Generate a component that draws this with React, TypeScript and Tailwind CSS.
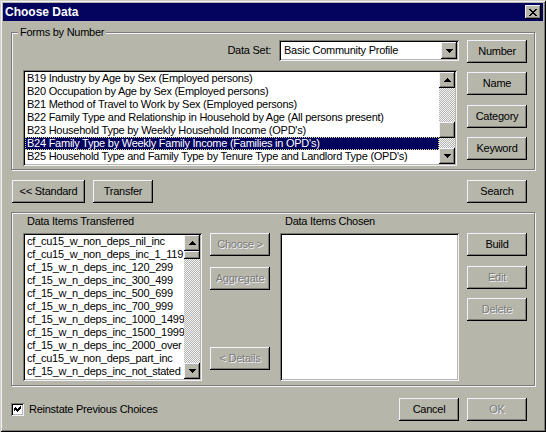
import React from 'react';

const raised =
  'bg-[#b6b6aa] shadow-[inset_-1px_-1px_0_#000,inset_1px_1px_0_#f2f2fe,inset_-2px_-2px_0_#7c7c74]';
const sunken =
  'shadow-[inset_1px_1px_0_#7c7c74,inset_-1px_-1px_0_#f2f2fe,inset_2px_2px_0_#000,inset_-2px_-2px_0_#b6b6aa]';
const etched = 'border border-[#7c7c74] shadow-[inset_1px_1px_0_#f2f2fe,1px_1px_0_#f2f2fe]';
const track =
  'bg-[image:repeating-conic-gradient(#f2f2fe_0_25%,#b6b6aa_0_50%)] bg-[length:2px_2px]';

const forms = [
  'B19 Industry by Age by Sex (Employed persons)',
  'B20 Occupation by Age by Sex (Employed persons)',
  'B21 Method of Travel to Work by Sex (Employed persons)',
  'B22 Family Type and Relationship in Household by Age (All persons present)',
  "B23 Household Type by Weekly Household Income (OPD's)",
  "B24 Family Type by Weekly Family Income (Families in OPD's)",
  "B25 Household Type and Family Type by Tenure Type and Landlord Type (OPD's)",
  "B26 Household Type and Family Type by Household Size (OPD's)",
];

const transferred = [
  'cf_cu15_w_non_deps_nil_inc',
  'cf_cu15_w_non_deps_inc_1_119',
  'cf_15_w_n_deps_inc_120_299',
  'cf_15_w_n_deps_inc_300_499',
  'cf_15_w_n_deps_inc_500_699',
  'cf_15_w_n_deps_inc_700_999',
  'cf_15_w_n_deps_inc_1000_1499',
  'cf_15_w_n_deps_inc_1500_1999',
  'cf_15_w_n_deps_inc_2000_over',
  'cf_cu15_w_non_deps_part_inc',
  'cf_15_w_n_deps_inc_not_stated',
];

function Btn({ label, className = '', disabled = false }: { label: string; className?: string; disabled?: boolean }) {
  return (
    <button
      type="button"
      className={`${raised} h-[23px] shrink-0 flex items-center justify-center leading-none ${
        disabled ? 'text-[#7c7c74] [text-shadow:1px_1px_0_#f2f2fe]' : 'text-black'
      } ${className}`}
    >
      {label}
    </button>
  );
}

function Arrow({ dir, className = 'w-[16px] h-[16px]' }: { dir: 'up' | 'down'; className?: string }) {
  const rows = dir === 'up' ? [0, 1, 2, 3] : [3, 2, 1, 0];
  return (
    <div className={`${raised} shrink-0 flex items-center justify-center ${className}`}>
      <svg width="7" height="4" viewBox="0 0 7 4" shapeRendering="crispEdges">
        {rows.map((r, i) => (
          <rect key={i} x={3 - r} y={i} width={r * 2 + 1} height={1} fill="#000" />
        ))}
      </svg>
    </div>
  );
}

function Scrollbar({ thumb }: { thumb: string }) {
  return (
    <div className="w-[16px] shrink-0 flex flex-col">
      <Arrow dir="up" />
      <div className={`flex-1 ${track}`}>
        <div className={`${raised} w-[16px] ${thumb}`} />
      </div>
      <Arrow dir="down" />
    </div>
  );
}

export default function App() {
  return (
    <div
      className={`w-[546px] h-[432px] bg-[#b6b6aa] p-[3px] flex flex-col font-['Liberation_Sans',Arial,sans-serif] text-[11px] tracking-[-0.25px] text-black shadow-[inset_1px_1px_0_#cfcfc4,inset_-1px_-1px_0_#000,inset_2px_2px_0_#f2f2fe,inset_-2px_-2px_0_#7c7c74]`}
    >
      {/* title bar */}
      <div className="h-[18px] shrink-0 bg-[#04045e] flex items-center justify-between pl-[2px] pr-[2px]">
        <span className="text-white font-bold text-[12px] tracking-normal leading-none">Choose Data</span>
        <div className={`${raised} w-[16px] h-[14px] flex items-center justify-center`}>
          <svg width="8" height="7" viewBox="0 0 8 7" shapeRendering="crispEdges">
            <path d="M0 0h2v1h-2zM6 0h2v1h-2zM1 1h2v1h-2zM5 1h2v1h-2zM2 2h4v1h-4zM3 3h2v1h-2zM2 4h4v1h-4zM1 5h2v1h-2zM5 5h2v1h-2zM0 6h2v1h-2zM6 6h2v1h-2z" fill="#000" />
          </svg>
        </div>
      </div>

      <div className="flex flex-col px-[8px]">
        {/* Forms by Number */}
        <div className={`${etched} mt-[11px] flex flex-col`}>
          <span className="-mt-[7px] ml-[6px] w-fit px-[2px] bg-[#b6b6aa] leading-[13px]">Forms by Number</span>
          <div className="mt-[1px] flex pl-[11px] pr-[7px] pb-[3px]">
            <div className="w-[434px] flex flex-col">
              <div className="h-[21px] flex items-center justify-end gap-[8px]">
                <span className="leading-none">Data Set:</span>
                <div className={`${sunken} -mr-[2px] w-[180px] h-[21px] bg-white p-[2px] flex items-center`}>
                  <span className="flex-1 pl-[3px] leading-none whitespace-nowrap">Basic Community Profile</span>
                  <Arrow dir="down" className="w-[16px] h-[17px]" />
                </div>
              </div>
              <div className={`${sunken} mt-[9px] h-[96px] bg-white p-[2px] flex`}>
                <div className="flex-1 overflow-hidden">
                  {forms.map((f, i) => (
                    <div
                      key={f}
                      className={`h-[13px] leading-[13px] whitespace-nowrap pl-[2px] ${
                        i === 5
                          ? 'bg-[#04045e] text-white outline-1 outline-dotted outline-[#d8d88c] -outline-offset-1'
                          : ''
                      }`}
                    >
                      {f}
                    </div>
                  ))}
                </div>
                <Scrollbar thumb="mt-[34px] h-[16px]" />
              </div>
            </div>
            <div className="ml-[10px] w-[60px] flex flex-col">
              <Btn label="Number" />
              <Btn label="Name" className="mt-[9px]" />
              <Btn label="Category" className="mt-[10px]" />
              <Btn label="Keyword" className="mt-[9px]" />
            </div>
          </div>
        </div>

        {/* middle buttons */}
        <div className="mt-[10px] flex pl-[1px] pr-[8px]">
          <Btn label="<< Standard" className="w-[73px]" />
          <Btn label="Transfer" className="ml-[8px] w-[60px]" />
          <Btn label="Search" className="ml-auto w-[60px]" />
        </div>

        {/* Data items */}
        <div className={`${etched} mt-[9px] flex pl-[11px] pr-[7px] pt-[2px] pb-[4px]`}>
          <div className="w-[179px] flex flex-col">
            <span className="pl-[4px] leading-[13px]">Data Items Transferred</span>
            <div className={`${sunken} mt-[5px] h-[148px] bg-white p-[2px] flex`}>
              <div className="flex-1 overflow-hidden">
                {transferred.map(t => (
                  <div key={t} className="h-[13px] leading-[13px] whitespace-nowrap pl-[2px]">
                    {t}
                  </div>
                ))}
              </div>
              <Scrollbar thumb="h-[8px]" />
            </div>
          </div>
          <div className="ml-[8px] w-[60px] pt-[18px] pb-[11px] flex flex-col">
            <Btn label="Choose >" disabled />
            <Btn label="Aggregate" disabled className="mt-[11px]" />
            <Btn label="< Details" disabled className="mt-auto" />
          </div>
          <div className="ml-[10px] w-[179px] flex flex-col">
            <span className="pl-[5px] leading-[13px]">Data Items Chosen</span>
            <div className={`${sunken} mt-[5px] h-[148px] bg-white`} />
          </div>
          <div className="ml-[8px] w-[60px] pt-[18px] flex flex-col">
            <Btn label="Build" />
            <Btn label="Edit" disabled className="mt-[10px]" />
            <Btn label="Delete" disabled className="mt-[9px]" />
          </div>
        </div>

        {/* bottom row */}
        <div className="mt-[12px] h-[23px] flex items-center pr-[8px]">
          <div className={`${sunken} w-[13px] h-[13px] bg-white flex items-center justify-center`}>
            <svg width="7" height="7" viewBox="0 0 7 7" shapeRendering="crispEdges">
              <path d="M6 0h1v3h-1zM5 1h1v3h-1zM4 2h1v3h-1zM3 3h1v3h-1zM2 2h1v3h-1zM1 1h1v3h-1zM0 2h1v3h-1z" fill="#000" />
            </svg>
          </div>
          <span className="ml-[5px] leading-none">Reinstate Previous Choices</span>
          <Btn label="Cancel" className="ml-auto w-[60px]" />
          <Btn label="OK" disabled className="ml-[8px] w-[60px]" />
        </div>
      </div>
    </div>
  );
}
